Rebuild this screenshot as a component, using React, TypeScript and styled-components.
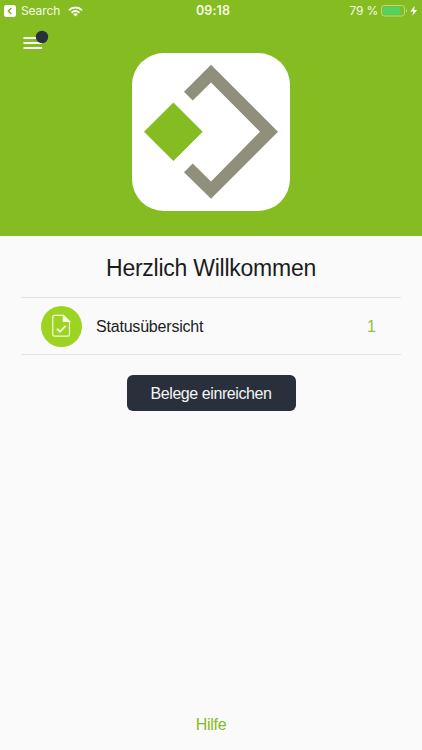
import styled, { createGlobalStyle } from 'styled-components';

const GlobalStyle = createGlobalStyle`
  * {
    box-sizing: border-box;
  }

  body {
    margin: 0;
    background: #fafafa;
    font-family: 'Liberation Sans', Arial, sans-serif;
  }
`;

const Screen = styled.div`
  display: flex;
  flex-direction: column;
  width: 422px;
  height: 750px;
  overflow: hidden;
  background: #fafafa;
  color: #1c1c1e;
`;

const Header = styled.header`
  display: flex;
  flex-direction: column;
  align-items: center;
  height: 236px;
  background: #84bc22;
`;

const StatusBar = styled.div`
  display: grid;
  grid-template-columns: 1fr auto 1fr;
  align-items: center;
  width: 100%;
  height: 22px;
  padding: 0 4px 0 4px;
  font-family: Inter, sans-serif;
  font-size: 12px;
  line-height: 22px;
  color: #f6fbe4;
`;

const StatusLeft = styled.div`
  display: flex;
  align-items: center;
`;

const StatusRight = styled.div`
  display: flex;
  align-items: center;
  justify-content: flex-end;
`;

const BackLabel = styled.span`
  margin: 0 8px 0 5px;
  font-size: 12px;
  letter-spacing: -0.1px;
`;

const Time = styled.span`
  padding-left: 4px;
  font-size: 12.5px;
  font-weight: 600;
  letter-spacing: 0.1px;
`;

const Percent = styled.span`
  margin-right: 3px;
  letter-spacing: -0.2px;
`;

const NavBar = styled.div`
  width: 100%;
  height: 31px;
  padding: 8px 0 0 23px;
`;

const MenuButton = styled.button`
  display: block;
  padding: 0;
  border: 0;
  background: none;
`;

const LogoTile = styled.div`
  width: 158px;
  height: 158px;
  border-radius: 32px;
  background: #fff;
`;

const Title = styled.h1`
  margin: 0;
  padding-top: 18px;
  height: 61px;
  font-size: 23px;
  font-weight: 400;
  letter-spacing: -0.25px;
  line-height: 28px;
  text-align: center;
`;

const StatusRow = styled.div`
  display: flex;
  align-items: center;
  height: 58px;
  margin: 0 21px;
  padding: 0 25px 0 20px;
  border-top: 1px solid #e3e3e6;
  border-bottom: 1px solid #e3e3e6;
`;

const RowIcon = styled.div`
  width: 41px;
  height: 41px;
  margin-right: 14px;
  border-radius: 50%;
  background: #9dd421;
`;

const RowLabel = styled.span`
  flex: 1;
  padding-top: 1px;
  font-size: 16px;
  letter-spacing: -0.2px;
`;

const RowCount = styled.span`
  padding-top: 1px;
  font-size: 16px;
  color: #93c13d;
`;

const SubmitButton = styled.button`
  align-self: center;
  width: 169px;
  height: 36px;
  margin-top: 20px;
  padding: 2px 0 0;
  border: 0;
  border-radius: 6px;
  background: #29303b;
  color: #f5f6f7;
  font-family: inherit;
  font-size: 16px;
  letter-spacing: -0.42px;
`;

const HelpLink = styled.a`
  align-self: center;
  margin-top: auto;
  padding-bottom: 15px;
  font-size: 16px;
  letter-spacing: -0.3px;
  line-height: 20px;
  color: #84bc22;
`;

const BackIcon = () => (
    <svg width="12" height="12" viewBox="0 0 12 12">
        <rect width="12" height="12" rx="2.5" fill="#fff" />
        <path d="M7.3 3 L4.3 6 L7.3 9" fill="none" stroke="#75a81e" strokeWidth="1.3" />
    </svg>
);

const WifiIcon = () => (
    <svg width="15" height="11" viewBox="0 0 15 11" fill="none" stroke="#fff" strokeWidth="1.9">
        <path d="M1 4.2 C4.7 .6 10.3 .6 14 4.2" />
        <path d="M3.6 6.8 C5.9 4.7 9.1 4.7 11.4 6.8" />
        <path d="M5.2 8.2 C6.6 7 8.4 7 9.8 8.2 L7.5 10.5 Z" fill="#fff" stroke="none" />
    </svg>
);

const BatteryIcon = () => (
    <svg width="37" height="12" viewBox="0 0 37 12">
        <rect x=".5" y=".5" width="23" height="10.5" rx="2.8" fill="none" stroke="#b9d984" />
        <rect x="2" y="2" width="17.5" height="7.5" rx="1.3" fill="#4fd461" />
        <path d="M25 4 C26.5 4.5 26.5 7 25 7.5 Z" fill="#b9d984" />
        <path d="M33.7 .8 L29.4 6.5 H32.3 L31.3 10.8 L36.2 5 H33.2 Z" fill="#fff" />
    </svg>
);

const MenuIcon = () => (
    <svg width="26" height="20" viewBox="0 0 26 20">
        <path d="M.5 8 H19 M.5 13 H19 M.5 18 H19" stroke="#fff" strokeWidth="1.9" />
        <circle cx="19" cy="7" r="6.2" fill="#29303b" />
    </svg>
);

const Logo = () => (
    <svg width="158" height="158" viewBox="0 0 158 158">
        <path d="M12 78.7 L41.4 49.4 L70.7 78.7 L41.4 108 Z" fill="#84bc22" />
        <path
            d="M79 11.7 L146 78.7 L79 145.8 L52 119.2 L60.7 110.4 L79 128.5 L128 78.7 L79 29.4 L60.7 47.6 L52 38.8 Z"
            fill="#8f8f7b"
        />
    </svg>
);

const DocumentIcon = () => (
    <svg width="41" height="41" viewBox="0 0 41 41" fill="none" stroke="#f4fbe0" strokeWidth="1.2">
        <path d="M22.3 9.4 H13.5 Q11.8 9.4 11.8 11.1 V28.5 Q11.8 30.2 13.5 30.2 H26.8 Q28.5 30.2 28.5 28.5 V15.5 Z" />
        <path d="M22.3 9.4 V15.5 H28.5 Z" fill="#f4fbe0" />
        <path d="M16 22.8 L19 25.7 L24.6 19.8" strokeWidth="1.9" />
    </svg>
);

export default function App() {
    return (
        <>
            <GlobalStyle />
            <Screen>
                <Header>
                    <StatusBar>
                        <StatusLeft>
                            <BackIcon />
                            <BackLabel>Search</BackLabel>
                            <WifiIcon />
                        </StatusLeft>
                        <Time>09:18</Time>
                        <StatusRight>
                            <Percent>79 %</Percent>
                            <BatteryIcon />
                        </StatusRight>
                    </StatusBar>
                    <NavBar>
                        <MenuButton aria-label="Menü">
                            <MenuIcon />
                        </MenuButton>
                    </NavBar>
                    <LogoTile>
                        <Logo />
                    </LogoTile>
                </Header>
                <Title>Herzlich Willkommen</Title>
                <StatusRow>
                    <RowIcon>
                        <DocumentIcon />
                    </RowIcon>
                    <RowLabel>Statusübersicht</RowLabel>
                    <RowCount>1</RowCount>
                </StatusRow>
                <SubmitButton>Belege einreichen</SubmitButton>
                <HelpLink>Hilfe</HelpLink>
            </Screen>
        </>
    );
}
